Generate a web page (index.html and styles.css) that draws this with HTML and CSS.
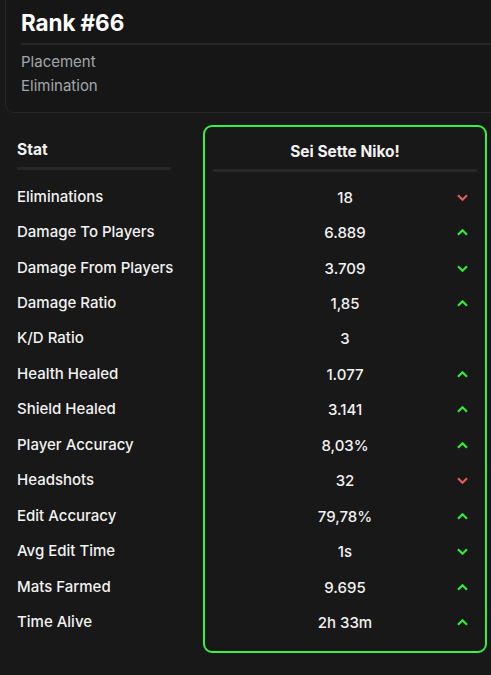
FILE: index.html
```html
<!DOCTYPE html>
<html>
<head>
<meta charset="utf-8">
<link rel="stylesheet" href="styles.css">
</head>
<body>
<div class="card">
  <h1 class="rank">Rank #66</h1>
  <div class="rule"></div>
  <div class="sub">Placement</div>
  <div class="sub">Elimination</div>
</div>
<div class="compare">
  <div class="labels">
    <div class="head">Stat</div>
    <div class="rule short"></div>
    <div class="rows">
      <div class="row">Eliminations</div>
      <div class="row">Damage To Players</div>
      <div class="row">Damage From Players</div>
      <div class="row">Damage Ratio</div>
      <div class="row">K/D Ratio</div>
      <div class="row">Health Healed</div>
      <div class="row">Shield Healed</div>
      <div class="row">Player Accuracy</div>
      <div class="row">Headshots</div>
      <div class="row">Edit Accuracy</div>
      <div class="row">Avg Edit Time</div>
      <div class="row">Mats Farmed</div>
      <div class="row">Time Alive</div>
    </div>
  </div>
  <div class="player">
    <div class="head center">Sei Sette Niko!</div>
    <div class="rule"></div>
    <div class="rows">
      <div class="vrow"><span class="val">18</span><svg class="chev down" viewBox="0 0 11 7"><polyline points="1,1.2 5.5,5.7 10,1.2"/></svg></div>
      <div class="vrow"><span class="val">6.889</span><svg class="chev up" viewBox="0 0 11 7"><polyline points="1,5.8 5.5,1.3 10,5.8"/></svg></div>
      <div class="vrow"><span class="val">3.709</span><svg class="chev up" viewBox="0 0 11 7"><polyline points="1,1.2 5.5,5.7 10,1.2"/></svg></div>
      <div class="vrow"><span class="val">1,85</span><svg class="chev up" viewBox="0 0 11 7"><polyline points="1,5.8 5.5,1.3 10,5.8"/></svg></div>
      <div class="vrow"><span class="val">3</span></div>
      <div class="vrow"><span class="val">1.077</span><svg class="chev up" viewBox="0 0 11 7"><polyline points="1,5.8 5.5,1.3 10,5.8"/></svg></div>
      <div class="vrow"><span class="val">3.141</span><svg class="chev up" viewBox="0 0 11 7"><polyline points="1,5.8 5.5,1.3 10,5.8"/></svg></div>
      <div class="vrow"><span class="val">8,03%</span><svg class="chev up" viewBox="0 0 11 7"><polyline points="1,5.8 5.5,1.3 10,5.8"/></svg></div>
      <div class="vrow"><span class="val">32</span><svg class="chev down" viewBox="0 0 11 7"><polyline points="1,1.2 5.5,5.7 10,1.2"/></svg></div>
      <div class="vrow"><span class="val">79,78%</span><svg class="chev up" viewBox="0 0 11 7"><polyline points="1,5.8 5.5,1.3 10,5.8"/></svg></div>
      <div class="vrow"><span class="val">1s</span><svg class="chev up" viewBox="0 0 11 7"><polyline points="1,1.2 5.5,5.7 10,1.2"/></svg></div>
      <div class="vrow"><span class="val">9.695</span><svg class="chev up" viewBox="0 0 11 7"><polyline points="1,5.8 5.5,1.3 10,5.8"/></svg></div>
      <div class="vrow"><span class="val">2h 33m</span><svg class="chev up" viewBox="0 0 11 7"><polyline points="1,5.8 5.5,1.3 10,5.8"/></svg></div>
    </div>
  </div>
</div>
</body>
</html>
```
FILE: styles.css
```css
html, body {
  margin: 0;
  padding: 0;
  background: #181818;
  color: #f2f2f2;
  font-family: Inter, "Noto Sans", sans-serif;
  overflow: hidden;
}
.card {
  margin: -20px 0 0 5px;
  border: 1px solid #262626;
  border-right: none;
  border-radius: 9px 0 0 9px;
  background: #161616;
  padding: 28px 0 14px 15px;
}
.rank {
  margin: 0;
  font-size: 22.5px;
  line-height: 28px;
  font-weight: 700;
  color: #ffffff;
  letter-spacing: -0.1px;
}
.rule {
  height: 3px;
  background: #272727;
}
.card .rule {
  height: 2px;
  margin: 6px 0 5px;
}
.sub {
  font-size: 15px;
  line-height: 24px;
  color: #a3a7ad;
}
.compare {
  display: flex;
  margin-top: 12px;
  padding-left: 17px;
}
.labels {
  width: 154px;
  margin-right: 32px;
  padding-top: 15px;
}
.head {
  font-size: 15.5px;
  font-weight: 700;
  line-height: 20px;
}
.center {
  text-align: center;
}
.labels .rule.short {
  margin-top: 7px;
}
.rows {
  display: flex;
  flex-direction: column;
}
.labels .rows {
  margin-top: 8.5px;
}
.row {
  height: 35.45px;
  display: flex;
  align-items: center;
  font-size: 15px;
  font-weight: 500;
  white-space: nowrap;
}
.player {
  width: 280px;
  border: 2px solid #38f040;
  border-radius: 9px;
  padding: 15px 0 11px;
}
.player .rule {
  margin: 7px 8px 0;
}
.player .rows {
  margin-top: 7.5px;
}
.vrow {
  height: 35.45px;
  display: grid;
  grid-template-columns: 1fr auto 1fr;
  align-items: center;
  font-size: 15px;
  font-weight: 500;
  white-space: nowrap;
}
.val {
  grid-column: 2;
}
.chev {
  grid-column: 3;
  justify-self: end;
  width: 11px;
  height: 7px;
  margin-right: 17px;
  fill: none;
  stroke-width: 2.2;
}
.chev.down { stroke: #e25c5c; }
.chev.up { stroke: #33e83f; }
```
